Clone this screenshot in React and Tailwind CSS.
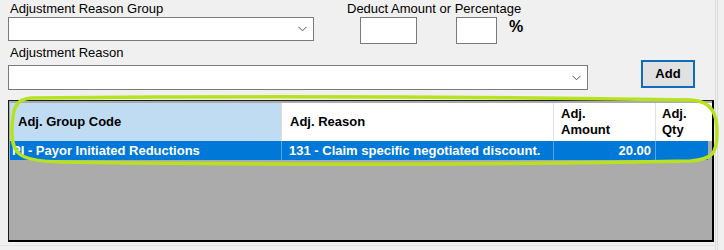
import React from "react";

const font = { fontFamily: '"Liberation Sans", Arial, sans-serif' };

const Chevron = () => (
  <svg width="9" height="6" viewBox="0 0 9 6" className="text-[#505050]">
    <path d="M0.5 0.8 L4.5 4.8 L8.5 0.8" fill="none" stroke="currentColor" strokeWidth="1" />
  </svg>
);

const Select = ({ className }) => (
  <div className={`flex items-center justify-end bg-white border border-[#7a7a7a] pr-[6px] ${className}`}>
    <Chevron />
  </div>
);

const Input = ({ className }) => (
  <div className={`bg-white border border-[#7a7a7a] ${className}`} />
);

export default function App() {
  return (
    <div className="w-[724px] h-[250px] bg-[#f0f0f0] relative overflow-hidden text-black" style={font}>
      <div className="absolute right-[6px] top-0 bottom-0 w-[3px] border-x border-[#dcdcdc]" />

      <div className="pl-[8px] pt-[1px] h-[90px]">
        {/* top row */}
        <div className="flex h-[43px]">
          <div className="w-[306px]">
            <div className="pl-[2px] text-[13px] leading-[15px]">Adjustment Reason Group</div>
            <Select className="h-[24px] mt-[1px]" />
          </div>
          <div className="ml-[33px] w-[190px]">
            <div className="text-[13px] leading-[15px]">Deduct Amount or Percentage</div>
            <div className="flex items-start mt-[1px]">
              <Input className="ml-[13px] w-[57px] h-[27px]" />
              <Input className="ml-[39px] w-[41px] h-[27px]" />
              <span className="ml-[12px] mt-[1px] text-[16px] font-bold leading-[18px]">%</span>
            </div>
          </div>
        </div>

        {/* second row */}
        <div className="flex items-start mt-[1px]">
          <div className="w-[580px]">
            <div className="pl-[2px] text-[13px] leading-[15px]">Adjustment Reason</div>
            <Select className="h-[25px] mt-[5px]" />
          </div>
          <button className="ml-[53px] mt-[15px] w-[54px] h-[28px] border-2 border-[#0f6cbd] bg-[#e1e1e1] text-[13px] font-bold leading-[16px]">
            Add
          </button>
        </div>
      </div>

      {/* grid */}
      <div className="relative ml-[8px] mt-[10px] w-[706px] h-[142px] bg-[#ababab] border-t border-l border-[#1a1a1a] border-b-[2px] border-r-[2px] border-b-black border-r-black">
        <div className="pl-[1px] pt-[2px]">
          <div className="flex h-[38px] text-[13px] font-bold bg-white">
            <div className="w-[272px] bg-[#bfdcf3] flex items-center pl-[8px] border-r border-[#e0e0e0]">Adj. Group Code</div>
            <div className="w-[272px] flex items-center pl-[8px] border-r border-[#e0e0e0]">Adj. Reason</div>
            <div className="w-[102px] flex items-center pl-[7px] leading-[16px] border-r border-[#e0e0e0]">Adj.<br />Amount</div>
            <div className="w-[52px] flex items-center pl-[6px] leading-[16px]">Adj.<br />Qty</div>
          </div>
          <div className="flex h-[19px] text-[13px] font-bold text-white bg-[#0078d7] w-[698px]">
            <div className="w-[272px] flex items-center pl-[2px] border-r border-[#5aa6e4]">PI - Payor Initiated Reductions</div>
            <div className="w-[272px] flex items-center pl-[7px] border-r border-[#5aa6e4]">131 - Claim specific negotiated discount.</div>
            <div className="w-[102px] flex items-center justify-end pr-[4px] border-r border-[#5aa6e4]">20.00</div>
            <div className="w-[52px]" />
          </div>
        </div>

        {/* highlight annotation */}
        <svg className="absolute left-[-8px] top-[-6px] pointer-events-none" width="720" height="75" viewBox="0 0 720 75">
          <path
            d="M30 3 C250 1 500 2 690 5 C712 6 716 20 716 38 C716 58 712 64 690 66 C500 70 250 70 60 67 C20 66 11 60 11 38 C11 14 14 4 30 3 Z"
            fill="none"
            stroke="#b7e21f"
            strokeWidth="3.5"
          />
        </svg>
      </div>
      <div className="mt-[3px] h-[1px] w-[716px] bg-[#e2e2e2]" />
    </div>
  );
}
